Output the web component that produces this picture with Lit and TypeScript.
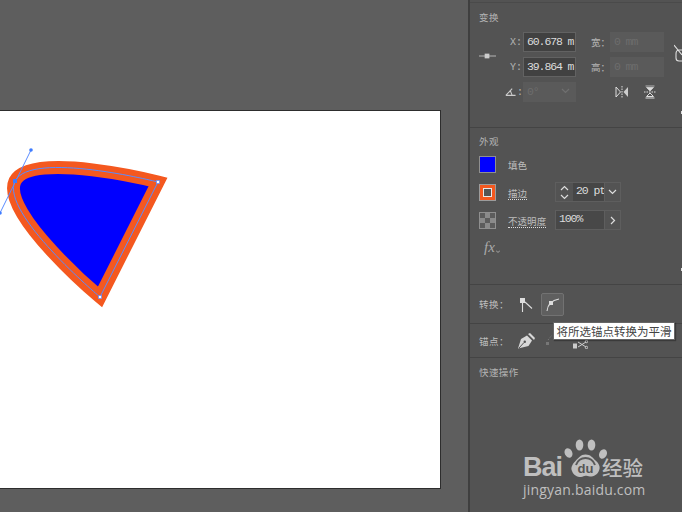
import { LitElement, html, css } from "lit";
import { customElement } from "lit/decorators.js";

@customElement("app-root")
export class AppRoot extends LitElement {
  static styles = css`
    :host { display: block; width: 682px; height: 512px; overflow: hidden; font-family: "Noto Sans CJK SC", "Liberation Sans", sans-serif; }
    .root { position: relative; display: flex; width: 682px; height: 512px; background: #5e5e5e; overflow: hidden; }
    .canvas { width: 468px; flex: none; padding-top: 110px; box-sizing: border-box; }
    .artboard { width: 441px; height: 379px; box-sizing: border-box; background: #fff; border: solid #2d2d2d; border-width: 1px 1px 1px 0; overflow: hidden; }
    .artboard svg { display: block; }
    .panel { width: 214px; flex: none; background: #535353; border-left: 2px solid #3f3f3f; box-sizing: border-box; color: #bdbdbd; font-size: 9.5px; }
    .s0 { height: 3px; border-bottom: 1px solid #4a4a4a; box-sizing: border-box; }
    .sec { box-sizing: border-box; border-bottom: 1px solid #444; padding-left: 9px; position: relative; }
    .title { height: 12px; line-height: 12px; color: #b4b4b4; letter-spacing: .4px; }
    .s1 { height: 125px; padding-top: 8px; }
    .s2 { height: 157px; padding-top: 7px; }
    .s3 { height: 39px; display: flex; align-items: center; }
    .s4 { height: 34px; display: flex; align-items: center; }
    .s5 { padding-top: 8px; border: 0; }
    .dot { position: absolute; right: 0; bottom: 13px; width: 1px; height: 3px; background: #ddd; }

    .tf { display: flex; margin-top: 9px; height: 45px; }
    .ref { width: 17px; height: 48px; display: flex; align-items: center; flex: none; }
    .tf-col { display: grid; grid-template-columns: 13px 53px; row-gap: 5px; align-items: center; margin-left: 14px; }
    .tf-col2 { display: grid; grid-template-columns: 20px 54px; row-gap: 5px; align-items: center; margin-left: 14px; }
    .lab { font-family: "Liberation Mono", monospace; font-size: 10px; color: #b4b4b4; white-space: nowrap; }
    .lab.cjk { font-family: "Noto Sans CJK SC", sans-serif; font-size: 9.5px; margin-left: 1px; }
    .box { height: 20px; box-sizing: border-box; display: flex; align-items: center; padding: 0 0 2px 3px; font-family: "Liberation Mono", monospace; font-size: 11.5px; letter-spacing: -1.1px; overflow: hidden; white-space: nowrap; }
    .on { background: #414141; border: 1px solid #626262; color: #dcdcdc; }
    .off { background: #5a5a5a; color: #6d6d6d; padding-left: 4px; }
    .angle { justify-content: space-between; padding-right: 6px; }
    .row3 { display: flex; align-items: center; margin-top: 5px; }
    .angle-col { margin-left: 31px; display: grid; grid-template-columns: 13px 53px; align-items: center; }
    .angle-lab { margin-left: -5px; display: flex; align-items: center; gap: 1px; }
    .flips { display: flex; gap: 14px; margin-left: 39px; align-items: center; }
    .link { position: absolute; right: 0; top: 41px; }
    .flips svg, .angle-lab svg { display: block; }

    .ap-row { display: flex; align-items: center; height: 20px; }
    .rows { margin-top: 7px; display: flex; flex-direction: column; gap: 8px; }
    .sw { width: 17px; height: 17px; flex: none; box-sizing: border-box; border: 1px solid #8f8f8f; }
    .sw.fill { background: #0000ff; }
    .sw.stroke { background: #f4581f; display: flex; align-items: center; justify-content: center; border-color: #9c9c9c; }
    .sw.stroke i { display: block; width: 9px; height: 9px; box-sizing: border-box; background: #555; border: 1px solid #e8e8e8; }
    .sw.opa { background: repeating-conic-gradient(#8a8a8a 0 25%, #5c5c5c 0 50%) 0 0 / 10px 10px; }
    .alab { width: 47px; margin-left: 12px; flex: none; white-space: nowrap; padding-top: 1px; letter-spacing: .05px; }
    .und { border-bottom: 1px dotted #ddd; line-height: 12px; display: inline-block; }
    .group { display: flex; height: 20px; width: 66px; box-sizing: border-box; border: 1px solid #5e5e5e; background: #535353; font-family: "Liberation Mono", monospace; font-size: 11.5px; letter-spacing: -1.1px; color: #dcdcdc; }
    .stp { width: 17px; display: flex; flex-direction: column; align-items: center; justify-content: center; gap: 3px; flex: none; }
    .val { width: 31px; flex: none; background: #464646; padding-left: 3px; box-sizing: border-box; overflow: hidden; white-space: nowrap; line-height: 15px; }
    .val.w { width: 48px; background: #484848; }
    .chev { flex: 1; display: flex; align-items: center; justify-content: center; border-left: 1px solid #5e5e5e; }
    .fx { margin-top: 9px; margin-left: 5px; display: flex; align-items: flex-end; gap: 1px; height: 16px; font-family: "Liberation Serif", serif; font-style: italic; font-size: 15px; line-height: 16px; color: #aaa; }
    .fx svg { display: block; margin-bottom: 2px; }

    .lbl2 { width: 40px; letter-spacing: .5px; flex: none; white-space: nowrap; }
    .s3 svg, .s4 svg { display: block; }
    .btn { width: 23px; height: 23px; box-sizing: border-box; border: 1px solid #727272; border-radius: 2px; background: #5f5f5f; display: flex; align-items: center; justify-content: center; margin-left: 8px; }
    .anc { display: flex; align-items: center; gap: 11px; margin-left: -1px; }
    .anc .cut { margin: 8px 0 0 8px; }

    .tip { position: absolute; left: 553px; top: 322px; width: 122px; height: 18px; box-sizing: border-box; background: #fff; border: 1px solid #666; color: #444; font-size: 11.5px; line-height: 16px; text-align: center; white-space: nowrap; box-shadow: 1px 1px 1px rgba(0,0,0,.3); }
    .wm { position: absolute; left: 523px; top: 437px; width: 126px; height: 68px; color: #bfbfbf; }
    .wm svg { position: absolute; left: 0; top: 0; }
    .wmb { position: absolute; left: 0; top: 18px; font: bold 27px/25px "Liberation Sans", sans-serif; letter-spacing: -1px; }
    .wmc { position: absolute; left: 79px; top: 17px; font: 500 20.500px/26px "Noto Sans CJK SC", sans-serif; white-space: nowrap; }
    .wmu { position: absolute; left: 0; top: 44px; font: 14px/18px "Open Sans", "Liberation Sans", sans-serif; white-space: nowrap; letter-spacing: .2px; }
  `;

  chevD(c = "#ddd") {
    return html`<svg width="9" height="6" viewBox="0 0 9 6"><path d="M1 1l3.500 3.500L8 1" fill="none" stroke="${c}" stroke-width="1.2"/></svg>`;
  }
  chevU(c = "#ddd") {
    return html`<svg width="9" height="6" viewBox="0 0 9 6"><path d="M1 5l3.500-3.500L8 5" fill="none" stroke="${c}" stroke-width="1.2"/></svg>`;
  }

  render() {
    const blue = "#5b8cff";
    return html`<div class="root">
      <div class="canvas">
        <div class="artboard">
          <svg width="440" height="378" viewBox="0 111 440 378">
            <path d="M158 182C158 182 31 150 15 181 0 213 100 297 100 297Z" fill="#0000ff" stroke="#f4581f" stroke-width="13" stroke-miterlimit="10"/>
            <path d="M158 182C158 182 31 150 15 181 0 213 100 297 100 297Z" fill="none" stroke="${blue}" stroke-width="1"/>
            <path d="M31 150L0 213" stroke="${blue}" fill="none"/>
            <circle cx="31" cy="150" r="1.800" fill="#3f7cff"/>
            <circle cx="0" cy="213" r="1.800" fill="#3f7cff"/>
            <rect x="13" y="179" width="4" height="4" fill="#3f7cff"/>
            <rect x="156.500" y="180.500" width="3" height="3" fill="#fff" stroke="${blue}" stroke-width=".7"/>
            <rect x="98.500" y="295.500" width="3" height="3" fill="#fff" stroke="${blue}" stroke-width=".7"/>
          </svg>
        </div>
      </div>

      <div class="panel">
        <div class="s0"></div>
        <div class="sec s1">
          <div class="title">变换</div>
          <div class="tf">
            <div class="ref">
              <svg width="18" height="8" viewBox="0 0 18 8"><path d="M0 4h18" stroke="#bbb"/><rect x="6" y="1.500" width="5" height="5" fill="#ccc"/></svg>
            </div>
            <div>
              <div class="tf-col">
                <span class="lab">X:</span><div class="box on">60.678 m</div>
                <span class="lab">Y:</span><div class="box on">39.864 m</div>
              </div>
            </div>
            <div class="tf-col2">
              <span class="lab cjk">宽：</span><div class="box off">0 mm</div>
              <span class="lab cjk">高：</span><div class="box off">0 mm</div>
            </div>
          </div>
          <div class="row3">
            <div class="angle-col">
              <span class="lab angle-lab"><svg width="13" height="10" viewBox="0 0 13 10"><path d="M1 9L8.500 1M1 9h11.500M6.500 4l2 5" fill="none" stroke="#ccc" stroke-width="1.300"/></svg>:</span>
              <div class="box off angle">0°${this.chevD("#707070")}</div>
            </div>
            <div class="flips">
              <svg width="14" height="12" viewBox="0 0 14 12"><path d="M1 1l4.500 5L1 11z" fill="none" stroke="#ddd"/><path d="M13 1L8.500 6l4.500 5z" fill="#ccc"/><path d="M7 0v12" stroke="#ddd" stroke-dasharray="1.500 1"/></svg>
              <svg width="14" height="14" viewBox="0 0 14 14"><path d="M2.500 1h9M3.500 2.500h7L7 6z" fill="#ddd" stroke="#ddd" stroke-width=".7"/><path d="M3.500 11.500h7L7 8z" fill="none" stroke="#ddd"/><path d="M2.500 13h9" stroke="#ddd"/><path d="M1 7h12" stroke="#ddd" stroke-dasharray="1.500 1"/></svg>
            </div>
          </div>
          <svg class="link" width="8" height="20" viewBox="0 0 8 20"><path d="M0 1l8 10M8 6H5Q2 6 2 10v4q0 3 3 3h3" fill="none" stroke="#ddd" stroke-width="1.100"/></svg>
          <i class="dot"></i>
        </div>

        <div class="sec s2">
          <div class="title">外观</div>
          <div class="rows">
            <div class="ap-row"><div class="sw fill"></div><span class="alab">填色</span></div>
            <div class="ap-row"><div class="sw stroke"><i></i></div><span class="alab"><span class="und">描边</span></span>
              <div class="group">
                <div class="stp">${this.chevU()}${this.chevD()}</div>
                <div class="val">20 pt</div>
                <div class="chev">${this.chevD()}</div>
              </div>
            </div>
            <div class="ap-row"><div class="sw opa"></div><span class="alab"><span class="und">不透明度</span></span>
              <div class="group">
                <div class="val w">100%</div>
                <div class="chev"><svg width="6" height="9" viewBox="0 0 6 9"><path d="M1 1l3.500 3.500L1 8" fill="none" stroke="#ddd" stroke-width="1.200"/></svg></div>
              </div>
            </div>
          </div>
          <div class="fx">fx<svg width="4" height="3" viewBox="0 0 4 3"><path d="M0 .5l2 2 2-2" fill="none" stroke="#aaa"/></svg></div>
          <i class="dot"></i>
        </div>

        <div class="sec s3">
          <span class="lbl2">转换：</span>
          <svg width="14" height="15" viewBox="0 0 14 15"><rect x="1" y="1" width="5" height="5" fill="#ddd"/><path d="M3.500 6v9M6 5l7 6.500" stroke="#ddd" fill="none" stroke-width="1.100"/></svg>
          <div class="btn">
            <svg width="16" height="16" viewBox="0 0 16 16"><rect x="4" y="5" width="4" height="4" fill="#ddd"/><path d="M2 15Q3 5 14 3" fill="none" stroke="#ddd" stroke-width="1.100"/></svg>
          </div>
        </div>

        <div class="sec s4">
          <span class="lbl2">锚点：</span>
          <div class="anc">
            <svg width="17" height="16" viewBox="0 0 17 16"><path d="M0 15.500L3 6l6-3.500 5 5L10.500 13z" fill="#d8d8d8"/><path d="M10 1l2-1 5 5-1 2z" fill="#d8d8d8"/><path d="M1 15l5-5.500" stroke="#535353"/><circle cx="6.800" cy="8.800" r="1.200" fill="#535353"/></svg>
            <svg width="8" height="13" viewBox="0 0 8 13"><rect x="0" y="8" width="3" height="3" fill="#777"/><path d="M2 6L6 1" stroke="#777" stroke-dasharray="1.500 1.500"/></svg>
            <svg class="cut" width="15" height="9" viewBox="0 0 15 9"><rect x="0" y="3.500" width="4" height="5" fill="#ccc"/><path d="M5 2l8 5M5 7l8-5" stroke="#ccc"/><circle cx="13.500" cy="1.500" r="1.200" fill="none" stroke="#ccc"/><circle cx="13.500" cy="7.500" r="1.200" fill="none" stroke="#ccc"/></svg>
          </div>
        </div>

        <div class="sec s5"><div class="title">快速操作</div></div>
      </div>

      <div class="tip">将所选锚点转换为平滑</div>

      <div class="wm">
        <svg width="126" height="44" viewBox="0 0 126 44">
          <g fill="#bfbfbf">
            <ellipse cx="45.500" cy="16" rx="3.800" ry="5" transform="rotate(-25 45.500 16)"/>
            <ellipse cx="56.500" cy="8" rx="3.800" ry="5.500"/>
            <ellipse cx="68.500" cy="8" rx="3.800" ry="5.500"/>
            <ellipse cx="80" cy="17" rx="3.800" ry="5" transform="rotate(25 80 17)"/>
            <path d="M62.500 17.500c5 0 7 3 10 6 4 3.500 5 7 3.500 10-1.500 4-5 6-9 6-2 0-3-.7-4.500-.7S60 40 58 40c-4 0-7.500-2-9-6-1.500-3 0-6.500 3.500-10 3-3 5-6.500 10-6.500z"/>
          </g>
          <path d="M53 28c1.500-4 4.500-7 9.500-7s8 3 9.500 7" fill="none" stroke="#5a5a5a" stroke-width="2"/>
          <text x="62.500" y="36" text-anchor="middle" font-family="Liberation Sans, sans-serif" font-weight="bold" font-size="13" fill="#555">du</text>
        </svg>
        <span class="wmb">Bai</span>
        <span class="wmc">经验</span>
        <span class="wmu">jingyan.baidu.com</span>
      </div>
    </div>`;
  }
}
